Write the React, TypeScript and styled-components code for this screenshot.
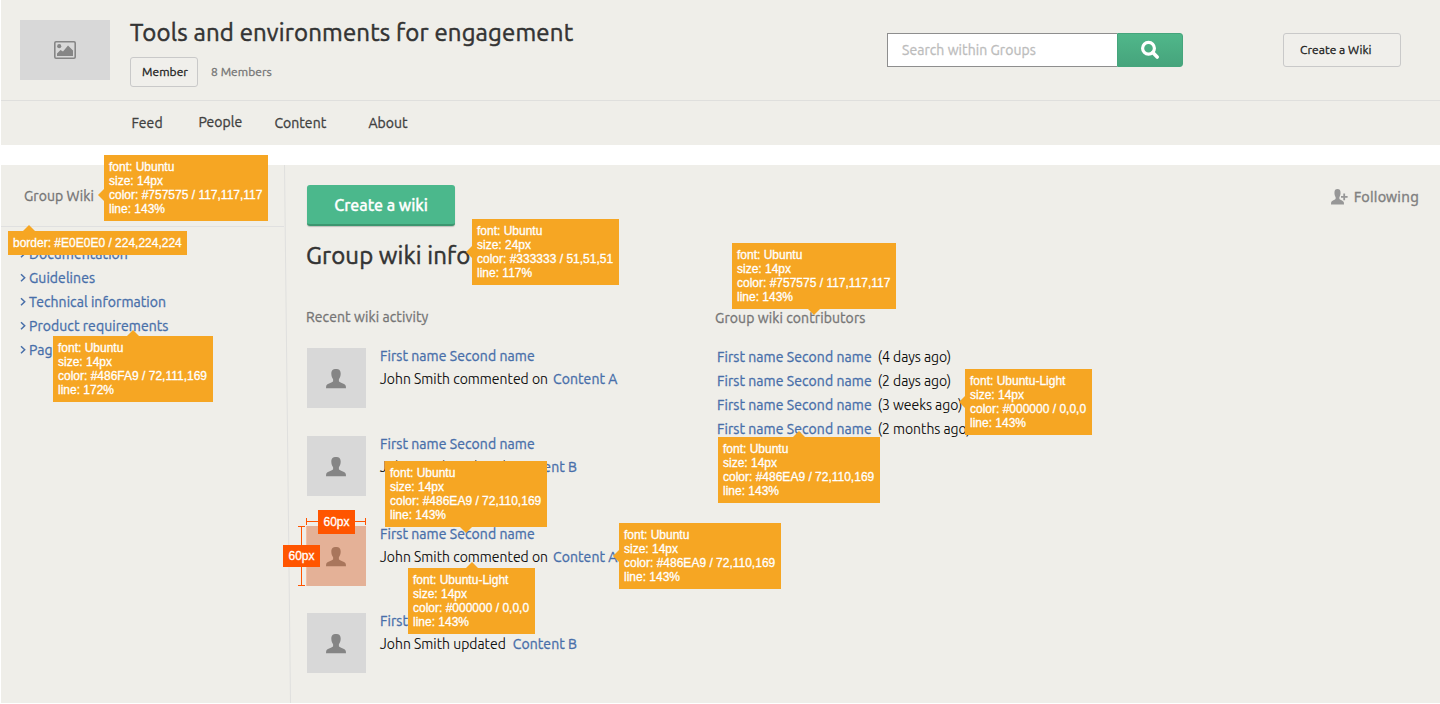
import React from "react";
import styled, { createGlobalStyle, css } from "styled-components";

const GlobalStyle = createGlobalStyle`
  * { box-sizing: border-box; }
  body { margin: 0; background: #fff; font-family: Ubuntu, "Noto Sans", "Open Sans", sans-serif; font-size: 14px; line-height: 20px; letter-spacing: 0.06px; -webkit-text-stroke: 0.3px currentColor; overflow: hidden; }
  h1, h2, h3, p, ul { margin: 0; padding: 0; font-size: 14px; font-weight: 400; list-style: none; }
  button { font: inherit; letter-spacing: inherit; cursor: pointer; }
`;

const Page = styled.div`
  position: relative;
  height: 704px;
  padding-left: 1px;
  display: flex;
  flex-direction: column;
  gap: 20px;
`;

const Header = styled.header`
  height: 145px;
  flex: none;
  background: #efeee9;
`;

const Banner = styled.div`
  display: flex;
  align-items: flex-start;
  height: 101px;
  padding: 20px 39px 0 19px;
  border-bottom: 1px solid #dfdfdd;
`;

const GroupImage = styled.div`
  width: 90px;
  height: 60px;
  display: flex;
  align-items: center;
  justify-content: center;
  padding-bottom: 1px;
  background: #d8d8d8;
`;

const GroupInfo = styled.div`
  width: 777px;
  padding-left: 20px;
`;

const Title = styled.h1`
  font-size: 24px;
  line-height: 28px;
  letter-spacing: 0.16px;
  color: #333;
  margin-top: -1px;
  -webkit-text-stroke-width: 0.5px;
`;

const Membership = styled.div`
  display: flex;
  align-items: center;
  margin-top: 10px;
  font-size: 12px;
  gap: 13px;
  color: #757575;
`;

const OutlineButton = styled.button<{ $w: number; $h: number; $pad: number }>`
  width: ${(p) => p.$w}px;
  height: ${(p) => p.$h}px;
  padding: 0 0 1px ${(p) => p.$pad}px;
  text-align: left;
  font-size: 12px;
  line-height: 18px;
  letter-spacing: 0.05px;
  color: #222;
  background: #f0efeb;
  border: 1px solid #c9c9c9;
  border-radius: 3px;
`;

const Search = styled.div`
  display: flex;
  width: 296px;
  height: 34px;
  margin: 13px 100px 0 0;
`;

const SearchField = styled.div`
  width: 230px;
  padding: 6px 0 0 14px;
  background: #fff;
  border: 1px solid #8e8e8e;
  border-right: 0;
  color: #bcbcbc;
`;

const SearchButton = styled.button`
  width: 66px;
  padding: 0;
  display: flex;
  align-items: center;
  justify-content: center;
  border: 1px solid #45a57c;
  border-radius: 0 3px 3px 0;
  background: linear-gradient(#50b78a, #46a47c);
`;

const HeaderAction = styled.div`
  padding-top: 13px;
`;

const Nav = styled.nav`
  display: flex;
  padding: 12px 0 0 130.4px;
  color: #404040;
`;

const NavItem = styled.span<{ $w: number; $raised?: boolean }>`
  width: ${(p) => p.$w}px;
  margin-top: ${(p) => (p.$raised ? -1 : 0)}px;
`;

const Body = styled.div`
  display: flex;
  height: 538px;
  background: #efeee9;
`;

const Sidebar = styled.aside`
  width: 283px;
  flex: none;
`;

const SidebarTitle = styled.h3`
  height: 62px;
  padding: 21px 0 0 23px;
  border-bottom: 1px solid #e0e0e0;
  color: #757575;
`;

const PageLinks = styled.ul`
  padding: 15px 0 0 18.500px;
`;

const PageLink = styled.li`
  display: flex;
  align-items: center;
  height: 24px;
  gap: 3.500px;
  color: #486fa9;
`;

const Divider = styled.div`
  width: 1px;
  flex: none;
  background: #e0e0de;
  transform: skewX(0.64deg);
  transform-origin: 0 0;
`;

const Main = styled.main`
  flex: 1;
  padding: 20px 21px 0 21px;
`;

const Toolbar = styled.div`
  display: flex;
  justify-content: space-between;
  padding-left: 1px;
`;

const PrimaryButton = styled.button`
  width: 148px;
  height: 41px;
  padding: 0;
  border: 0;
  border-bottom: 2px solid #3c966f;
  border-radius: 3px;
  background: #4bb88c;
  color: #fff;
  font-size: 16px;
  font-weight: 500;
  letter-spacing: -0.04px;
  box-shadow: 0 1px 1px rgba(0, 0, 0, 0.2);
`;

const Follow = styled.div`
  display: flex;
  align-items: flex-start;
  padding-top: 2px;
  gap: 6px;
  color: #808080;
  font-family: "Noto Sans", sans-serif;
  letter-spacing: 0.25px;
  svg { margin-top: 2px; }
`;

const Heading = styled.h2`
  margin-top: 16px;
  font-size: 24px;
  line-height: 28px;
  letter-spacing: 0.1px;
  color: #333;
  -webkit-text-stroke-width: 0.5px;
`;

const Columns = styled.div`
  display: flex;
  margin-top: 37px;
`;

const Activity = styled.section`
  width: 408px;
`;

const SectionTitle = styled.h3`
  color: #757575;
  letter-spacing: 0.1px;
`;

const Entry = styled.article<{ $gap: number }>`
  display: flex;
  gap: 14px;
  height: 60px;
  margin: ${(p) => p.$gap}px 0 0 1px;
`;

const Avatar = styled.div`
  width: 59px;
  height: 60px;
  display: flex;
  align-items: center;
  justify-content: center;
  padding: 1px 1px 0 0;
  background: #d8d8d8;
`;

const EntryText = styled.div`
  margin-top: -2px;
  display: flex;
  flex-direction: column;
  gap: 3px;
`;

const Link = styled.a`
  color: #486ea9;
  letter-spacing: 0.07px;
`;

const Sentence = styled.p<{ $space: number }>`
  display: flex;
  gap: ${(p) => p.$space}px;
  color: #000;
  font-weight: 300;
  letter-spacing: 0.03px;
  white-space: nowrap;
  -webkit-text-stroke-width: 0.1px;
  ${Link} {
    font-weight: 400;
    -webkit-text-stroke-width: 0.3px;
  }
`;

const Contributors = styled.section`
  padding: 1px 0 0 1px;
`;

const ContributorList = styled.ul`
  padding: 17px 0 0 2px;
`;

const Contributor = styled.li`
  display: flex;
  align-items: center;
  gap: 6px;
  height: 24px;
`;

const Ago = styled.span`
  color: #000;
  font-weight: 300;
  letter-spacing: -0.02px;
  -webkit-text-stroke-width: 0.1px;
`;

type Side = "left" | "up" | "down";

const arrows = {
  left: css<{ $at: number }>`left: -6px; top: ${(p) => p.$at - 6}px; border-width: 6px 6px 6px 0; border-right-color: #f6a623;`,
  up: css<{ $at: number }>`top: -6px; left: ${(p) => p.$at - 6}px; border-width: 0 6px 6px; border-bottom-color: #f6a623;`,
  down: css<{ $at: number }>`bottom: -6px; left: ${(p) => p.$at - 6}px; border-width: 6px 6px 0; border-top-color: #f6a623;`,
};

const NoteBox = styled.div<{ $x: number; $y: number; $w: number; $side: Side; $at: number }>`
  position: absolute;
  left: ${(p) => p.$x}px;
  top: ${(p) => p.$y}px;
  width: ${(p) => p.$w}px;
  padding: 5px;
  background: #f6a623;
  color: #fff;
  font: 12px/14px Helvetica, "Liberation Sans", sans-serif;
  letter-spacing: 0;
  -webkit-text-stroke: 0.3px #fff;
  white-space: nowrap;
  &::before {
    content: "";
    position: absolute;
    border: 0 solid transparent;
    ${(p) => arrows[p.$side]}
  }
`;

const SizeOverlay = styled.div`
  position: absolute;
  left: 306px;
  top: 526px;
  width: 60px;
  height: 60px;
  background: rgba(255, 85, 0, 0.3);
`;

const WidthRule = styled.div`
  position: absolute;
  left: 0;
  top: -8px;
  width: 60px;
  height: 7px;
  border: solid #ff5500;
  border-width: 0 1px;
  background: linear-gradient(#ff5500, #ff5500) 0 3px / 100% 1px no-repeat;
`;

const HeightRule = styled.div`
  position: absolute;
  left: -8px;
  top: 0;
  width: 7px;
  height: 60px;
  border: solid #ff5500;
  border-width: 1px 0;
  background: linear-gradient(#ff5500, #ff5500) 3px 0 / 1px 100% no-repeat;
`;

const SizeLabel = styled.span<{ $x: number; $y: number; $h: number }>`
  position: absolute;
  left: ${(p) => p.$x}px;
  top: ${(p) => p.$y}px;
  width: 37px;
  text-align: center;
  background: #ff5500;
  color: #fff;
  font: 12px/${(p) => p.$h}px Helvetica, "Liberation Sans", sans-serif;
  letter-spacing: 0;
  -webkit-text-stroke: 0.3px #fff;
`;

const PERSON =
  "M10 0C13 0 14.700 1.200 14.700 4.600C14.700 7 14 8.800 12.900 10.200V12.200C13.600 13.800 19 14.200 19.800 17L20 19.300H0L.2 17C1 14.200 6.400 13.800 7.100 12.200V10.200C6 8.800 5.300 7 5.300 4.600C5.300 1.200 7 0 10 0Z";

const PersonIcon = () => (
  <svg width="20" height="20" viewBox="0 0 20 20" fill="#858585">
    <path d={PERSON} />
  </svg>
);

const FollowIcon = () => (
  <svg width="17" height="16" viewBox="0 0 17 16" fill="#979797">
    <path d={PERSON} transform="scale(.65 .8)" />
    <path d="M12.300 4.500h1.800v2.500h2.500v1.800h-2.500v2.500h-1.800v-2.500H10V7h2.300z" />
  </svg>
);

const ImageIcon = () => (
  <svg width="22" height="18" viewBox="0 0 22 18" fill="none">
    <rect x="0.800" y="0.800" width="20.400" height="16.400" rx="1.200" stroke="#868686" strokeWidth="1.600" />
    <circle cx="5.200" cy="5.200" r="2.100" fill="#868686" />
    <path d="M3 15v-2.500l3.500-3.500 2.500 1.500 5-6 5 5v5.500z" fill="#868686" />
  </svg>
);

const SearchIcon = () => (
  <svg width="20" height="20" viewBox="0 0 20 20" fill="none" stroke="#fff">
    <circle cx="8.500" cy="8.200" r="5.900" strokeWidth="3.200" />
    <path d="M12.800 12.600L17.200 17" strokeWidth="3.600" strokeLinecap="round" />
  </svg>
);

const Chevron = () => (
  <svg width="6" height="10" viewBox="0 0 6 10" fill="none" stroke="#486fa9" strokeWidth="1.500">
    <path d="M1 1.200L4.700 4.700L1 8.200" />
  </svg>
);

const pages = ["Documentation", "Guidelines", "Technical information", "Product requirements", "Pages"];

const activity = [
  { gap: 21, text: "John Smith commented on", space: 5, target: "Content A" },
  { gap: 28, text: "John Smith updated", space: 7, target: "Content B" },
  { gap: 30, text: "John Smith commented on", space: 5, target: "Content A" },
  { gap: 27, text: "John Smith updated", space: 7, target: "Content B" },
];

const contributors = ["(4 days ago)", "(2 days ago)", "(3 weeks ago)", "(2 months ago)"];

const spec = (font: string, size: number, color: string, line: number) => [
  `font: ${font}`,
  `size: ${size}px`,
  `color: ${color}`,
  `line: ${line}%`,
];

const notes: { x: number; y: number; w: number; side: Side; at: number; lines: string[] }[] = [
  { x: 104, y: 155, w: 164, side: "left", at: 40, lines: spec("Ubuntu", 14, "#757575 / 117,117,117", 143) },
  { x: 8, y: 231, w: 179, side: "up", at: 21, lines: ["border: #E0E0E0 / 224,224,224"] },
  { x: 53, y: 336, w: 160, side: "up", at: 80, lines: spec("Ubuntu", 14, "#486FA9 / 72,111,169", 172) },
  { x: 472, y: 219, w: 147, side: "left", at: 33, lines: spec("Ubuntu", 24, "#333333 / 51,51,51", 117) },
  { x: 732, y: 243, w: 164, side: "down", at: 82, lines: spec("Ubuntu", 14, "#757575 / 117,117,117", 143) },
  { x: 965, y: 369, w: 127, side: "left", at: 33, lines: spec("Ubuntu-Light", 14, "#000000 / 0,0,0", 143) },
  { x: 718, y: 437, w: 162, side: "up", at: 81, lines: spec("Ubuntu", 14, "#486EA9 / 72,110,169", 143) },
  { x: 385, y: 461, w: 162, side: "down", at: 81, lines: spec("Ubuntu", 14, "#486EA9 / 72,110,169", 143) },
  { x: 408, y: 568, w: 127, side: "up", at: 64, lines: spec("Ubuntu-Light", 14, "#000000 / 0,0,0", 143) },
  { x: 619, y: 523, w: 162, side: "left", at: 33, lines: spec("Ubuntu", 14, "#486EA9 / 72,110,169", 143) },
];

export default function App() {
  return (
    <Page>
      <GlobalStyle />
      <Header>
        <Banner>
          <GroupImage><ImageIcon /></GroupImage>
          <GroupInfo>
            <Title>Tools and environments for engagement</Title>
            <Membership>
              <OutlineButton $w={68} $h={30} $pad={11}>Member</OutlineButton>
              <span>8 Members</span>
            </Membership>
          </GroupInfo>
          <Search>
            <SearchField>Search within Groups</SearchField>
            <SearchButton aria-label="Search"><SearchIcon /></SearchButton>
          </Search>
          <HeaderAction>
            <OutlineButton $w={118} $h={34} $pad={16}>Create a Wiki</OutlineButton>
          </HeaderAction>
        </Banner>
        <Nav>
          <NavItem $w={67}>Feed</NavItem>
          <NavItem $w={76} $raised>People</NavItem>
          <NavItem $w={94}>Content</NavItem>
          <NavItem $w={60}>About</NavItem>
        </Nav>
      </Header>
      <Body>
        <Sidebar>
          <SidebarTitle>Group Wiki</SidebarTitle>
          <PageLinks>
            {pages.map((p) => (
              <PageLink key={p}><Chevron />{p}</PageLink>
            ))}
          </PageLinks>
        </Sidebar>
        <Divider />
        <Main>
          <Toolbar>
            <PrimaryButton>Create a wiki</PrimaryButton>
            <Follow><FollowIcon />Following</Follow>
          </Toolbar>
          <Heading>Group wiki info</Heading>
          <Columns>
            <Activity>
              <SectionTitle>Recent wiki activity</SectionTitle>
              {activity.map((a, i) => (
                <Entry key={i} $gap={a.gap}>
                  <Avatar><PersonIcon /></Avatar>
                  <EntryText>
                    <Link>First name Second name</Link>
                    <Sentence $space={a.space}>
                      <span>{a.text}</span>
                      <Link>{a.target}</Link>
                    </Sentence>
                  </EntryText>
                </Entry>
              ))}
            </Activity>
            <Contributors>
              <SectionTitle>Group wiki contributors</SectionTitle>
              <ContributorList>
                {contributors.map((c) => (
                  <Contributor key={c}>
                    <Link>First name Second name</Link>
                    <Ago>{c}</Ago>
                  </Contributor>
                ))}
              </ContributorList>
            </Contributors>
          </Columns>
        </Main>
      </Body>
      {notes.map((n) => (
        <NoteBox key={`${n.x}-${n.y}`} $x={n.x} $y={n.y} $w={n.w} $side={n.side} $at={n.at}>
          {n.lines.map((l) => (
            <div key={l}>{l}</div>
          ))}
        </NoteBox>
      ))}
      <SizeOverlay>
        <WidthRule />
        <HeightRule />
        <SizeLabel $x={12} $y={-16} $h={24}>60px</SizeLabel>
        <SizeLabel $x={-23} $y={19} $h={22}>60px</SizeLabel>
      </SizeOverlay>
    </Page>
  );
}
